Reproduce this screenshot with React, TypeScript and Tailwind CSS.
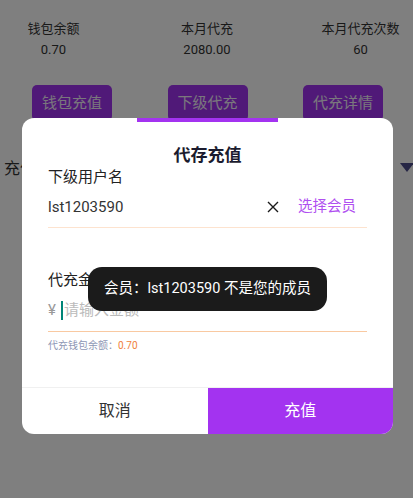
import React from "react";

const font = { fontFamily: "Roboto, 'Noto Sans CJK SC', sans-serif" };

function Stat({ label, value }: { label: string; value: string }) {
  return (
    <div className="w-[101px] flex flex-col items-center">
      <div className="text-[13px] leading-[18px] text-[#333333]">{label}</div>
      <div className="mt-[3px] text-[13px] leading-[18px] text-[#333333]">{value}</div>
    </div>
  );
}

function PageBtn({ text }: { text: string }) {
  return (
    <div className="w-[80px] h-[36px] rounded-[5px] bg-[#a033f0] text-[#f4eefa] text-[15px] flex items-center justify-center">
      {text}
    </div>
  );
}

export default function App() {
  return (
    <div className="relative w-full h-[498px] bg-white overflow-hidden" style={font}>
      {/* page */}
      <div className="pt-[20px]">
        <div className="flex justify-between pl-[3px] pr-[2px]">
          <Stat label="钱包余额" value="0.70" />
          <Stat label="本月代充" value="2080.00" />
          <Stat label="本月代充次数" value="60" />
        </div>
        <div className="mt-[26px] flex justify-between pl-[32px] pr-[30px]">
          <PageBtn text="钱包充值" />
          <PageBtn text="下级代充" />
          <PageBtn text="代充详情" />
        </div>
        <div className="mt-[37px] flex items-center justify-between pl-[4px]">
          <div className="text-[16px] leading-[22px] text-[#333333]">充值记录</div>
          <div className="w-0 h-0 border-l-[7px] border-r-[7px] border-t-[9px] border-l-transparent border-r-transparent border-t-[#4c4c8a] mr-[-1px] mt-[-3px]" />
        </div>
      </div>

      {/* overlay */}
      <div className="absolute inset-0 bg-black/50" />

      {/* modal */}
      <div className="absolute left-[22px] top-[118px] w-[371px] h-[316px] bg-white rounded-[12px] flex flex-col">
        <div className="absolute top-0 left-[115px] w-[141px] h-[4px] bg-[#a333f0]" />
        <div className="pt-[25px] text-center text-[17px] leading-[24px] font-bold text-[#1b1b2e]">代存充值</div>
        <div className="px-[26px] flex flex-col">
          <div className="text-[15px] leading-[20px] text-[#222222]">下级用户名</div>
          <div className="h-[41px] flex items-center border-b border-[#fde3cf]">
            <div className="flex-1 text-[15px] text-[#333333]">lst1203590</div>
            <svg width="12" height="12" viewBox="0 0 12 12" className="mr-[19px]">
              <path d="M1 1L11 11M11 1L1 11" stroke="#1a1a1a" strokeWidth="1.4" />
            </svg>
            <div className="text-[14.5px] text-[#b050f0] mr-[11px]">选择会员</div>
          </div>
          <div className="mt-[42px] text-[15px] leading-[20px] text-[#222222]">代充金额</div>
          <div className="h-[42px] flex items-center border-b border-[#f9c9a1]">
            <span className="text-[15px] text-[#999999]">¥</span>
            <span className="ml-[5px] w-[2.5px] h-[19px] bg-[#008577]" />
            <span className="text-[15px] text-[#bbbbbb] ml-[0.5px]">请输入金额</span>
          </div>
          <div className="mt-[7px] text-[10px] leading-[14px] text-[#8e97b5]">
            代充钱包余额：<span className="text-[#f07f3c]">0.70</span>
          </div>
        </div>
        <div className="mt-auto h-[47px] flex border-t border-[#f0f0f0]">
          <div className="flex-1 flex items-center justify-center text-[16px] text-[#333333] rounded-bl-[12px]">取消</div>
          <div className="flex-1 flex items-center justify-center text-[16px] text-white bg-[#a333f0] rounded-br-[12px]">充值</div>
        </div>
      </div>

      {/* toast */}
      <div className="absolute left-[88px] top-[267px] w-[239px] h-[44px] rounded-[14px] bg-[#1b1b1b] flex items-center justify-center text-[14.5px] text-white">
        会员：lst1203590 不是您的成员
      </div>
    </div>
  );
}
